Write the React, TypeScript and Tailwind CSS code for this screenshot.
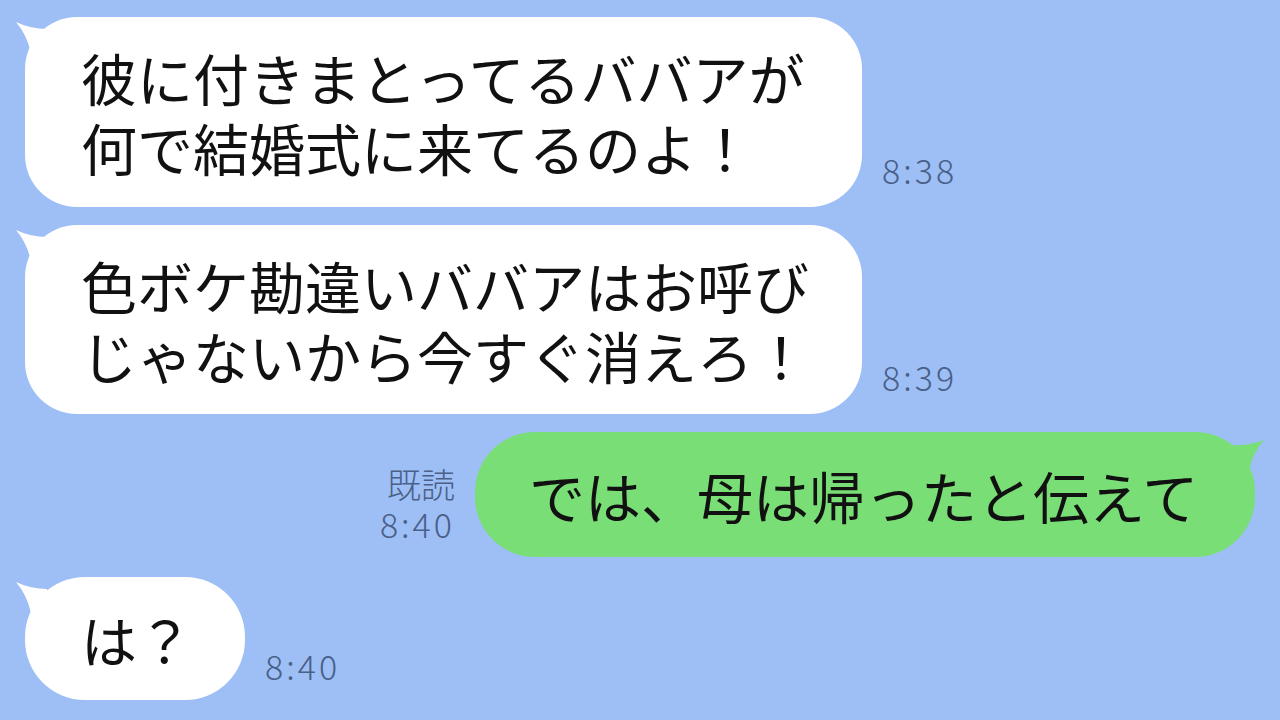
const jp = "font-['Noto_Sans_CJK_JP','Noto_Sans',sans-serif]";

function LeftTail() {
  return (
    <svg className="absolute -left-[12px] top-0" width="44" height="48" viewBox="-12 0 44 48">
      <path d="M -9 5 Q 6 12 22 12 L 22 44 L 6 36 Q 2 18 -9 5 Z" fill="#ffffff" />
    </svg>
  );
}

function RightTail() {
  return (
    <svg className="absolute -right-[12px] top-0" width="44" height="48" viewBox="-32 0 44 48">
      <path d="M 9 8 Q -6 14 -22 13 L -22 44 L -6 38 Q -2 20 9 8 Z" fill="#7ade77" />
    </svg>
  );
}

function Time({ children }: { children: React.ReactNode }) {
  return <div className="text-[34px] leading-[40px] tracking-[3px] font-light text-[#4b6088]">{children}</div>;
}

export default function App() {
  return (
    <div className={`h-[720px] w-[1280px] overflow-hidden bg-[#9dbff6] ${jp}`}>
      <div className="flex flex-col pt-[17px]">
        <div className="flex items-end gap-[20px] pl-[25px]">
          <div className="relative h-[190px] w-[837px] rounded-[52px] bg-white pl-[56px] pt-[25px] text-[56px] leading-[70px] text-[#111] whitespace-nowrap">
            <LeftTail />
            <div className="relative">彼に付きまとってるババアが</div>
            <div className="relative">何で結婚式に来てるのよ！</div>
          </div>
          <div className="pb-[17px]">
            <Time>8:38</Time>
          </div>
        </div>

        <div className="mt-[18px] flex items-end gap-[20px] pl-[25px]">
          <div className="relative h-[189px] w-[837px] rounded-[52px] bg-white pl-[56px] pt-[25px] text-[56px] leading-[70px] text-[#111] whitespace-nowrap">
            <LeftTail />
            <div className="relative">色ボケ勘違いババアはお呼び</div>
            <div className="relative">じゃないから今すぐ消えろ！</div>
          </div>
          <div className="pb-[17px]">
            <Time>8:39</Time>
          </div>
        </div>

        <div className="mt-[18px] flex items-end justify-end gap-[20px] pr-[25px]">
          <div className="flex flex-col items-end pb-[13px]">
            <div className="text-[34px] leading-[40px] font-light text-[#4b6088]">既読</div>
            <Time>8:40</Time>
          </div>
          <div className="relative flex h-[125px] w-[780px] items-center rounded-[60px] bg-[#7ade77] pl-[54px] text-[56px] leading-[70px] text-[#111] whitespace-nowrap">
            <RightTail />
            <div className="relative">では、母は帰ったと伝えて</div>
          </div>
        </div>

        <div className="mt-[20px] flex items-end gap-[20px] pl-[25px]">
          <div className="relative flex h-[123px] w-[220px] items-center rounded-[60px] bg-white pl-[56px] text-[56px] leading-[70px] text-[#111] whitespace-nowrap">
            <LeftTail />
            <div className="relative">は？</div>
          </div>
          <div className="pb-[14px]">
            <Time>8:40</Time>
          </div>
        </div>
      </div>
    </div>
  );
}
